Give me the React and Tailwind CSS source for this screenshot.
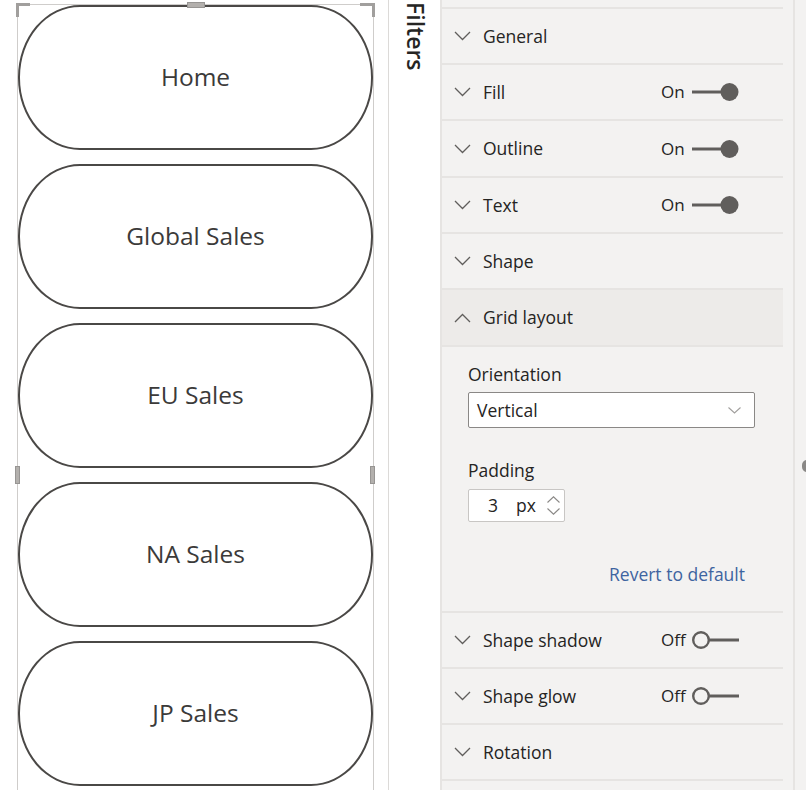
import React from 'react';

const font = { fontFamily: '"Open Sans", "Noto Sans", sans-serif' };

const Chevron = ({ up = false }) => (
  <svg width="17" height="10" viewBox="0 0 17 10" className="shrink-0">
    <path
      d={up ? 'M1 9 L8.5 1.5 L16 9' : 'M1 1 L8.5 8.5 L16 1'}
      fill="none"
      stroke="#605e5c"
      strokeWidth="1.3"
    />
  </svg>
);

const Switch = ({ on }) => (
  <div className="flex items-center">
    <span className="w-[31px] text-[17px] text-[#252423]">{on ? 'On' : 'Off'}</span>
    <svg width="48" height="20" viewBox="0 0 48 20">
      {on ? (
        <>
          <line x1="0" y1="10" x2="32" y2="10" stroke="#605e5c" strokeWidth="3" />
          <circle cx="37.5" cy="10" r="9" fill="#605e5c" />
        </>
      ) : (
        <>
          <circle cx="9" cy="10" r="7.8" fill="none" stroke="#605e5c" strokeWidth="2.4" />
          <line x1="16.5" y1="10" x2="47" y2="10" stroke="#605e5c" strokeWidth="3" />
        </>
      )}
    </svg>
  </div>
);

const Row = ({ title, toggle, open = false, tall = false }) => (
  <div
    className={`${tall ? 'h-[57px]' : 'h-[56px]'} flex items-center border-b-2 border-[#e6e4e2] pl-[12px] pr-[43px] ${
      open ? 'bg-[#edebe9]' : ''
    }`}
  >
    <Chevron up={open} />
    <span className="ml-[12px] flex-1 text-[17.5px] text-[#252423]">{title}</span>
    {toggle !== undefined && <Switch on={toggle} />}
  </div>
);

const pills = ['Home', 'Global Sales', 'EU Sales', 'NA Sales', 'JP Sales'];

export default function App() {
  return (
    <div className="w-[806px] h-[790px] overflow-hidden flex bg-white" style={font}>
      {/* report canvas */}
      <div className="relative w-[389px] h-full border-r border-[#dcdad8] bg-white">
        <div className="ml-[17px] mt-[4px] w-[357px] h-[800px] border border-b-0 border-[#cfcdcb]">
          <div className="flex flex-col gap-[14px]">
            {pills.map((p) => (
              <div
                key={p}
                className="h-[145px] w-[355px] rounded-[62px/72px] border-2 border-[#4a4846] flex items-center justify-center text-[24.5px] text-[#3b3a39]"
              >
                {p}
              </div>
            ))}
          </div>
        </div>
        {/* selection handles */}
        <div className="absolute left-[16px] top-[3px] w-[14px] h-[14px] border-l-[3px] border-t-[3px] border-[#a19f9d]" />
        <div className="absolute left-[360px] top-[3px] w-[15px] h-[14px] border-r-[3px] border-t-[3px] border-[#a19f9d]" />
        <div className="absolute left-[187px] top-[2px] w-[18px] h-[6px] bg-[#b3b0ad] border border-[#979593]" />
        <div className="absolute left-[15px] top-[466px] w-[5px] h-[18px] bg-[#b3b0ad] border border-[#979593]" />
        <div className="absolute left-[370px] top-[466px] w-[5px] h-[18px] bg-[#b3b0ad] border border-[#979593]" />
      </div>

      {/* filters pane */}
      <div className="w-[51px] h-full bg-white flex justify-center pt-[2px]">
        <span className="[writing-mode:vertical-rl] text-[23px] font-semibold text-[#252423] ml-[2px]">
          Filters
        </span>
      </div>

      {/* format pane */}
      <div className="w-[355px] h-full bg-[#f3f2f1] border-l-2 border-r-2 border-[#e6e4e2] pt-[7px]">
        <div className="w-[341px] border-t-2 border-[#e6e4e2]">
          <Row title="General" />
          <Row title="Fill" toggle={true} />
          <Row title="Outline" toggle={true} tall />
          <Row title="Text" toggle={true} />
          <Row title="Shape" />
          <Row title="Grid layout" open tall />
          <div className="h-[266px] border-b-2 border-[#e6e4e2] pl-[26px] pr-[36px] pt-[16px] text-[#252423]">
            <div className="text-[17.5px] leading-[22px]">Orientation</div>
            <div className="mt-[7px] w-[287px] h-[36px] bg-white border border-[#8a8886] rounded-[2px] flex items-center justify-between pl-[8px] pr-[13px]">
              <span className="text-[17.5px]">Vertical</span>
              <svg width="13" height="7" viewBox="0 0 13 7">
                <path d="M0.5 0.5 L6.5 6 L12.5 0.5" fill="none" stroke="#a19f9d" strokeWidth="1.1" />
              </svg>
            </div>
            <div className="mt-[31px] text-[17.5px] leading-[22px]">Padding</div>
            <div className="mt-[8px] w-[97px] h-[33px] bg-white border border-[#c8c6c4] rounded-[2px] flex items-center">
              <span className="w-[29px] text-right text-[17.5px]">3</span>
              <span className="ml-[18px] text-[17.5px]">px</span>
              <div className="ml-auto mr-[4px] flex flex-col gap-[5px]">
                <svg width="13" height="7" viewBox="0 0 13 7">
                  <path d="M0.5 6.5 L6.5 0.8 L12.5 6.5" fill="none" stroke="#8a8886" strokeWidth="1.1" />
                </svg>
                <svg width="13" height="7" viewBox="0 0 13 7">
                  <path d="M0.5 0.5 L6.5 6.2 L12.5 0.5" fill="none" stroke="#8a8886" strokeWidth="1.1" />
                </svg>
              </div>
            </div>
            <div className="mt-[41px] flex justify-end pr-[2px] text-[17.5px] leading-[22px] text-[#3e64a0]">
              Revert to default
            </div>
          </div>
          <Row title="Shape shadow" toggle={false} />
          <Row title="Shape glow" toggle={false} />
          <Row title="Rotation" />
          <Row title="" />
        </div>
      </div>

      {/* edge of next pane */}
      <div className="relative flex-1 h-full bg-[#f3f2f1]">
        <div className="absolute left-[7px] top-[460px] w-[10px] h-[12px] rounded-full bg-[#8a8886]" />
      </div>
    </div>
  );
}
